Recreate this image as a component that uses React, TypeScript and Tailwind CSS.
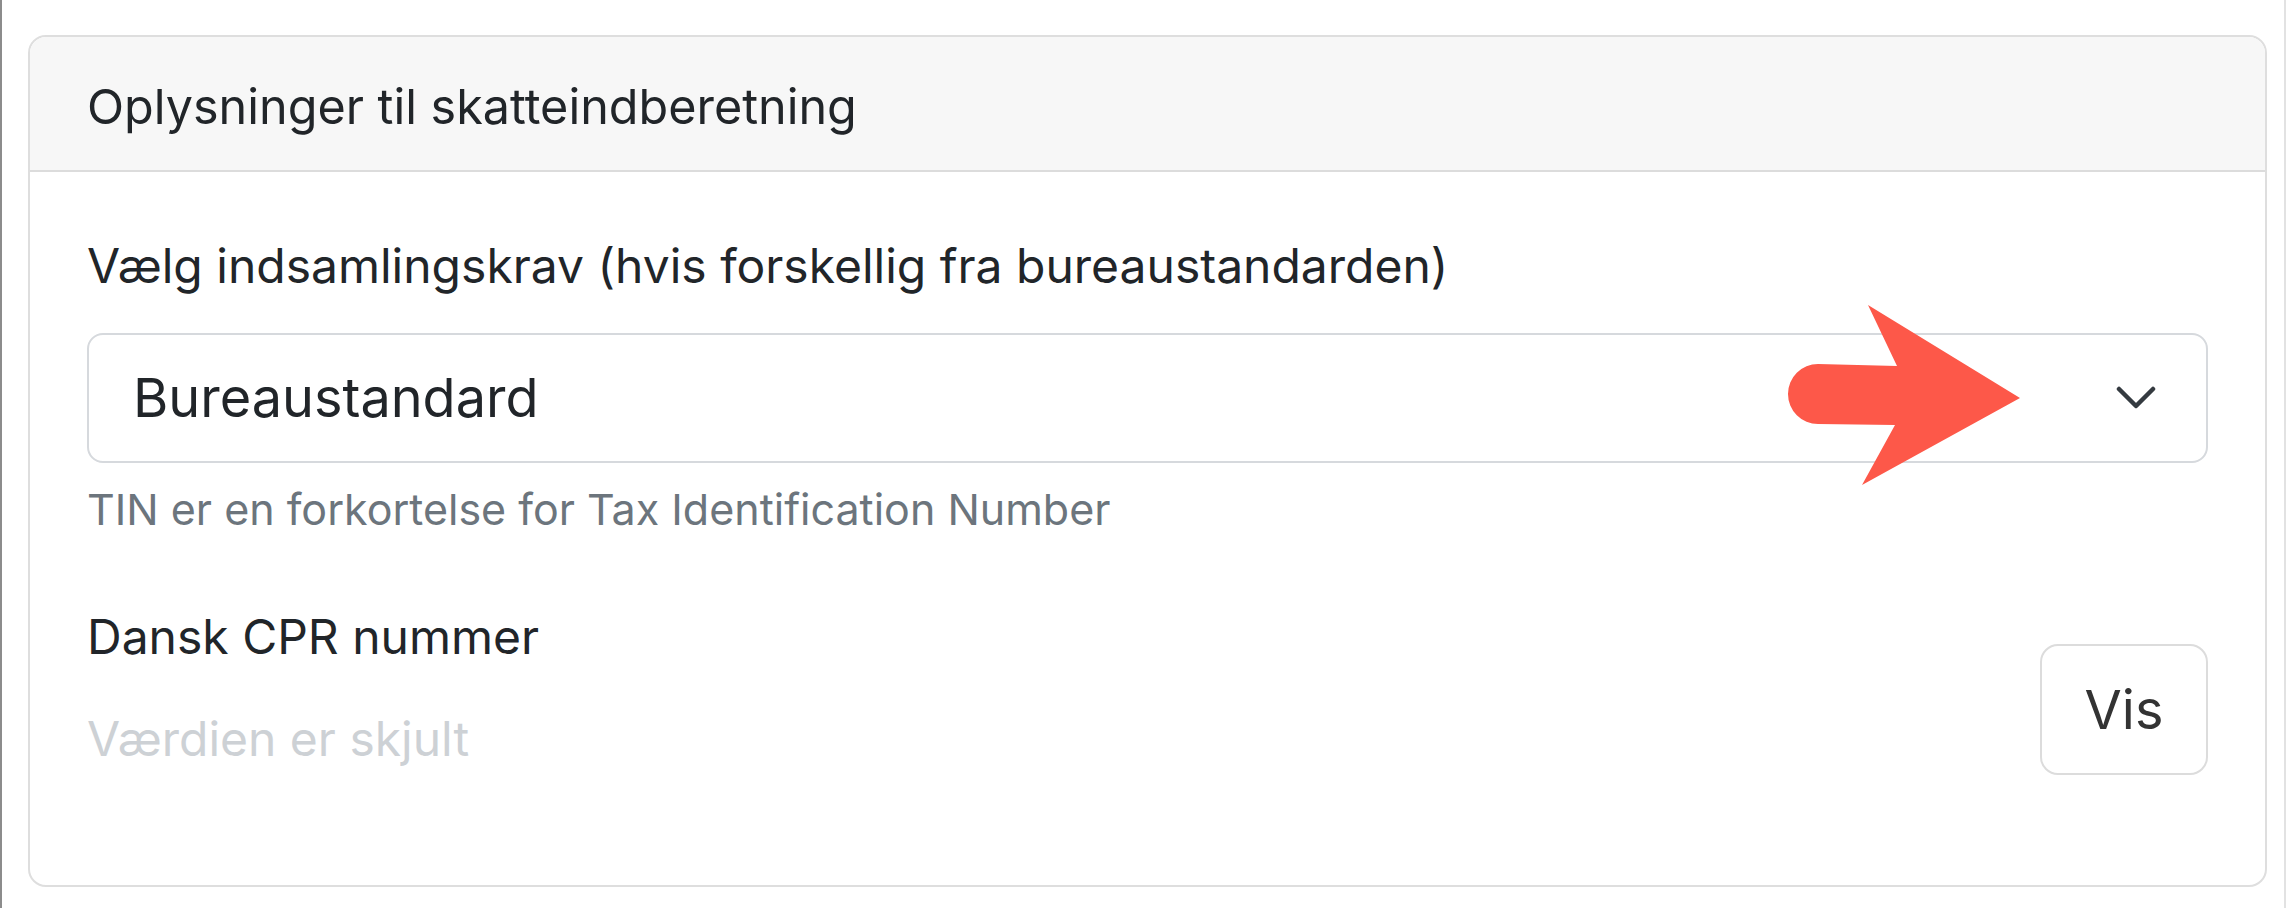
import React from "react";

export default function App() {
  return (
    <div className="relative box-border w-[2286px] h-[908px] bg-white border-l-2 border-l-[#8c8c8c] border-r-2 border-r-[#e2e2e2] pt-[35px] pl-[26px] font-['Inter',sans-serif] text-[#212529]">
      <div className="box-border w-[2239px] border-2 border-[#dedede] rounded-[18px] overflow-hidden bg-white">
        <div className="bg-[#f7f7f7] border-b-2 border-[#dcdcdc] px-[57px] pt-[34px] pb-[27px] text-[48.5px] leading-[72px] text-[#212529]">
          Oplysninger til skatteindberetning
        </div>
        <div className="px-[57px] pt-[58px] pb-[110px]">
          <div className="text-[48px] leading-[72px] mb-[31px]">
            Vælg indsamlingskrav (hvis forskellig fra bureaustandarden)
          </div>
          <div className="box-border h-[130px] border-2 border-[#d6d9dd] rounded-[16px] flex items-center justify-between pl-[44px] pr-[50px] bg-white">
            <span className="text-[54px] leading-[66px] text-[#212529]">Bureaustandard</span>
            <svg width="40" height="24" viewBox="0 0 40 24" fill="none">
              <path d="M3 3 L20 20 L37 3" stroke="#343a40" strokeWidth="4.5" strokeLinecap="round" strokeLinejoin="round" />
            </svg>
          </div>
          <div className="mt-[15px] text-[43px] leading-[63px] text-[#6c757d]">
            TIN er en forkortelse for Tax Identification Number
          </div>
          <div className="mt-[60px] flex items-end justify-between">
            <div className="flex flex-col">
              <div className="text-[48px] leading-[72px] text-[#212529]">Dansk CPR nummer</div>
              <div className="mt-[30px] text-[48px] leading-[72px] text-[#cdd1d5]">Værdien er skjult</div>
            </div>
            <button className="box-border w-[168px] h-[131px] border-2 border-[#dcdcdc] rounded-[18px] bg-white text-[54px] leading-[66px] text-[#333333] flex items-center justify-center">
              Vis
            </button>
          </div>
        </div>
      </div>
      <svg
        className="absolute top-0 left-[-2px] pointer-events-none"
        width="2286"
        height="908"
        viewBox="0 0 2286 908"
      >
        <path
          d="M1868 305 L2020 398 L1862 485 L1895 425 L1818 424 A30 30 0 0 1 1818 364 L1897 366 Z"
          fill="#fd5849"
        />
      </svg>
    </div>
  );
}
